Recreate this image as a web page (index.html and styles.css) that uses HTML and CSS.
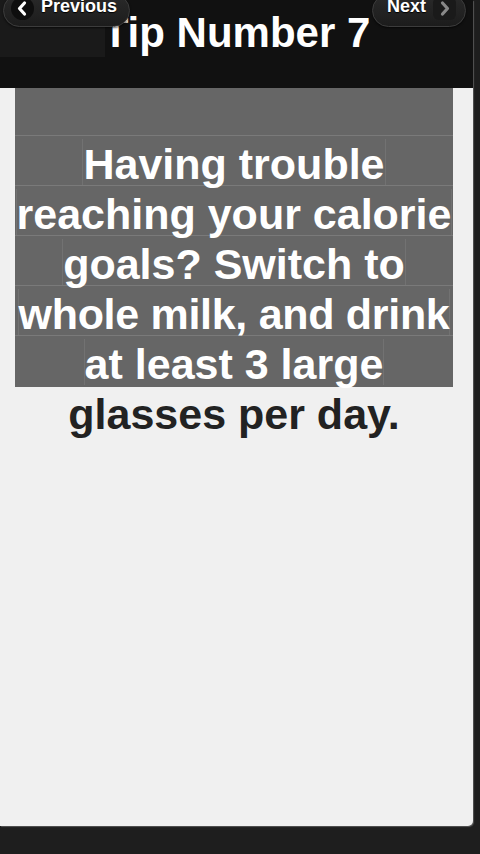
FILE: index.html
```html
<!DOCTYPE html>
<html>
<head>
<meta charset="utf-8">
<link rel="stylesheet" href="styles.css">
</head>
<body>
<div class="page">
  <div class="header">
    <h1 class="title">Tip Number 7</h1>
    <div class="left-cover"></div>
    <a class="btn btn-prev">
      <span class="ico"><svg width="23" height="23" viewBox="0 0 23 23"><path d="M13.5 6 L8.5 11.5 L13.5 17" fill="none" stroke="#fff" stroke-width="3.2" stroke-linecap="round" stroke-linejoin="round"/></svg></span>
      <span class="lbl">Previous</span>
    </a>
    <a class="btn btn-next">
      <span class="lbl">Next</span>
      <span class="ico ico-next"><svg width="23" height="23" viewBox="0 0 23 23"><path d="M9.5 6 L14.5 11.5 L9.5 17" fill="none" stroke="#888" stroke-width="3.2" stroke-linecap="round" stroke-linejoin="round"/></svg></span>
    </a>
  </div>
  <div class="content">
    <div class="tip">
      <div class="sel">
        <div class="line"><span>Having trouble</span></div>
        <div class="line"><span>reaching your calorie</span></div>
        <div class="line"><span>goals? Switch to</span></div>
        <div class="line"><span class="tight">whole milk, and drink</span></div>
        <div class="line"><span>at least 3 large</span></div>
      </div>
      <div class="rest">glasses per day.</div>
    </div>
  </div>
</div>
</body>
</html>
```

FILE: styles.css
```css
html, body {
  margin: 0;
  padding: 0;
}
body {
  width: 480px;
  height: 854px;
  background: #1e1e1e;
  font-family: "Liberation Sans", Arial, sans-serif;
  overflow: hidden;
}
.page {
  width: 473px;
  height: 826px;
  background: #f0f0f0;
  border-bottom-right-radius: 5px;
  box-shadow: 1px 1px 1px #555;
  overflow: hidden;
}
.header {
  height: 88px;
  background: #111;
  display: grid;
  grid-template-columns: 1fr;
  grid-template-rows: 88px;
  overflow: hidden;
}
.header > * {
  grid-row: 1;
  grid-column: 1;
}
.title {
  margin: 12px 0 0 0;
  justify-self: center;
  align-self: start;
  color: #fff;
  font-size: 42px;
  line-height: 42px;
  font-weight: bold;
  z-index: 1;
}
.left-cover {
  justify-self: start;
  align-self: start;
  width: 105px;
  height: 57px;
  background: #1a1a1a;
  z-index: 2;
}
.btn {
  align-self: start;
  z-index: 3;
  margin-top: -6px;
  height: 33px;
  border: 1px solid #3c3c3c;
  border-radius: 18px;
  background: linear-gradient(#2a2a2a, #1c1c1c);
  display: flex;
  align-items: flex-start;
  color: #fff;
  font-size: 18px;
  font-weight: bold;
  text-shadow: 0 1px 1px #000;
  box-shadow: 0 1px 2px rgba(0,0,0,0.6);
  box-sizing: border-box;
}
.btn-prev {
  justify-self: start;
  margin-left: 3px;
  width: 127px;
  padding-left: 7px;
  gap: 7px;
}
.btn-next {
  justify-self: end;
  margin-right: 7px;
  width: 94px;
  padding-left: 14px;
  gap: 7px;
}
.lbl {
  margin-top: 1px;
  line-height: 20px;
}
.ico {
  width: 23px;
  height: 23px;
  border-radius: 50%;
  background: #0e0e0e;
  margin-top: 2px;
  display: flex;
}
.ico-next {
  background: #1a1a1a;
  border-radius: 6px;
}
.content {
  padding: 0 20px 0 15px;
}
.tip {
  text-align: center;
  font-size: 43px;
  font-weight: bold;
  line-height: 50px;
  white-space: nowrap;
}
.sel {
  background: #666;
  padding-top: 47px;
  padding-bottom: 2px;
  color: #fff;
}
.line {
  border-top: 1px solid #7a7a7a;
  height: 49px;
}
.line span {
  display: inline-block;
  border-left: 1px solid #727272;
  border-right: 1px solid #727272;
  line-height: 50px;
  margin-top: 3px;
  height: 46px;
}
.line .tight {
  letter-spacing: -0.3px;
}
.rest {
  color: #222;
  line-height: 50px;
  padding-top: 2px;
}
```
